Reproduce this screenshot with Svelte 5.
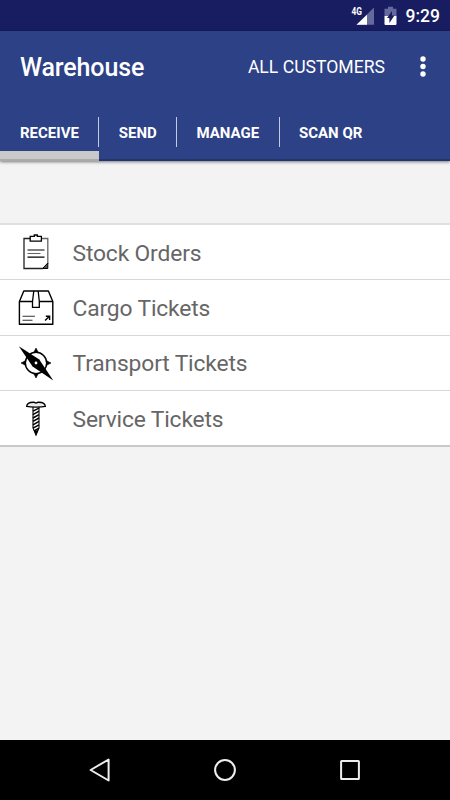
<script>
  const tabs = ['RECEIVE', 'SEND', 'MANAGE', 'SCAN QR'];

  const items = [
    { icon: 'clipboard', label: 'Stock Orders' },
    { icon: 'box', label: 'Cargo Tickets' },
    { icon: 'compass', label: 'Transport Tickets' },
    { icon: 'screw', label: 'Service Tickets' },
  ];

  let active = $state(0);
</script>

<div class="screen">
  <div class="status-bar">
    <svg class="signal" width="24" height="20" viewBox="0 0 24 20">
      <path d="M23 1.5v17.3H5.5z" fill="#66699b" />
      <path d="M16 8.7v10.1H5.5z" fill="#fff" />
      <text x="0.5" y="9.2" textLength="10.5" lengthAdjust="spacingAndGlyphs">4G</text>
    </svg>
    <svg class="battery" width="13" height="20" viewBox="0 0 13 20">
      <path d="M4 0.7h5v2h3.5V10H0.5V2.7H4z" fill="#66699b" />
      <path d="M0.5 10h12v8a1 1 0 0 1-1 1h-10a1 1 0 0 1-1-1z" fill="#fff" />
      <path d="M8 5v4.6h2.4L5.4 17v-5H3z" fill="#171d60" />
    </svg>
    <span class="clock">9:29</span>
  </div>

  <header class="app-bar">
    <div class="toolbar">
      <h1>Warehouse</h1>
      <button class="filter">ALL CUSTOMERS</button>
      <button class="overflow" aria-label="More options">
        <svg width="6" height="22" viewBox="0 0 6 22" fill="#fff">
          <circle cx="3" cy="3" r="2.7" />
          <circle cx="3" cy="10.5" r="2.7" />
          <circle cx="3" cy="18" r="2.7" />
        </svg>
      </button>
    </div>
    <nav class="tabs">
      {#each tabs as tab, i}
        <button class="tab" class:active={active === i} onclick={() => (active = i)}>
          <span>{tab}</span>
        </button>
      {/each}
    </nav>
  </header>

  <main>
    <ul class="list">
      {#each items as item}
        <li>
          <svg class="icon" width="38" height="38" viewBox="0 0 38 38" fill="none" stroke="#000">
            {#if item.icon === 'clipboard'}
              <path d="M24.5 4.5h6.3V30" stroke="#666" stroke-width="1.3" />
              <path d="M13 4.5H7v30h18.8" stroke="#222" stroke-width="1.3" />
              <path d="M13.2 2.3h4.1V1h3v1.3h4.1v4.9H13.2z" stroke-width="1.3" />
              <path d="M10.5 16h17M10.5 23.2h17" stroke-width="1.2" />
              <path d="M10.5 19.5h13" stroke="#666" stroke-width="1.1" />
              <path d="M25.5 34.5l5.3-5.5v5.5z" fill="#555" stroke-width="1" />
            {:else if item.icon === 'box'}
              <path d="M2.4 12.5L6.8 2h24.6L35.8 12.5v22.8H2.4z" stroke-width="1.4" stroke-linejoin="round" />
              <path d="M2.4 12.5h13.2M22.4 12.5h13.4" stroke-width="1.5" />
              <path d="M16.8 2l-1.3 10.5v5.8h6.8v-5.8L21.2 2" stroke-width="1.3" />
              <path d="M5.5 27.3h12.4M5.5 31.2h10" stroke="#333" stroke-width="1.1" />
              <path d="M28 31.6l4.5-4.3M28.8 27.2h3.8v3.8" stroke-width="1.4" />
            {:else if item.icon === 'compass'}
              <g transform="translate(0 -1)">
                <circle cx="19" cy="19" r="10.7" stroke-width="1.5" />
                <path
                  d="M17 8l2-4 2 4zM17 30l2 4 2-4zM8 17l-4 2 4 2zM30 17l4 2-4 2z"
                  fill="#000"
                  stroke-width="0.6"
                />
                <path d="M1.8 2.2L22.3 15.6 36.3 36.6 15.6 22.6z" fill="#000" stroke="none" />
                <circle cx="19" cy="19" r="1.4" fill="#fff" stroke="none" />
              </g>
            {:else}
              <path
                d="M9.7 6.4C9.9 3 13.5 2.2 17 2.3l2 .8 2-.8c3.5-.1 7.1.7 7.3 4.1-4 1-14.6 1-18.6 0z"
                fill="#eee"
                stroke-width="1.4"
              />
              <path d="M16 7v21l3 7 3-7V7" stroke-width="1.1" />
              <path
                d="M16 11.2l6-3M16 14.6l6-3.4M16 18l6-3.4M16 21.4l6-3.4M16 24.8l6-3.4M16 28.2l6-3.4M17 31l5-2.8"
                stroke-width="1.5"
              />
              <path d="M17.2 31l4-1-2.2 5.5z" fill="#000" stroke="none" />
            {/if}
          </svg>
          <span class="label">{item.label}</span>
        </li>
      {/each}
    </ul>
  </main>

  <footer class="nav-bar">
    <svg width="24" height="26" viewBox="0 0 24 26">
      <path d="M20.6 2.5v21L2.6 13z" />
    </svg>
    <svg width="24" height="26" viewBox="0 0 24 26">
      <circle cx="12" cy="13" r="9.9" />
    </svg>
    <svg width="24" height="26" viewBox="0 0 24 26">
      <rect x="3.1" y="4.1" width="17.8" height="17.8" rx="0.5" />
    </svg>
  </footer>
</div>

<style>
  :global(body) {
    margin: 0;
  }

  .screen {
    display: flex;
    flex-direction: column;
    width: 450px;
    height: 800px;
    overflow: hidden;
    background: #f3f3f3;
    font-family: Roboto, sans-serif;
  }

  button {
    margin: 0;
    padding: 0;
    border: 0;
    background: none;
    color: inherit;
    font: inherit;
  }

  .status-bar {
    display: flex;
    flex: none;
    align-items: center;
    justify-content: flex-end;
    box-sizing: border-box;
    height: 31px;
    padding-right: 10px;
    background: #171d60;
    color: #fff;
  }

  .signal text {
    font-size: 10.5px;
    font-weight: 700;
    fill: #fff;
  }

  .battery {
    margin: 0 9px 0 9px;
  }

  .clock {
    padding-top: 2px;
    font-size: 17.5px;
    font-weight: 500;
    line-height: 31px;
  }

  .app-bar {
    position: relative;
    flex: none;
    height: 130px;
    background: #2d4186;
    box-shadow: inset 0 -2px 0 rgba(0, 0, 0, 0.18), 0 1px 3px rgba(0, 0, 0, 0.5);
    color: #fff;
  }

  .toolbar {
    display: flex;
    align-items: center;
    height: 71px;
    padding: 0 24.5px 0 20px;
  }

  h1 {
    flex: 1;
    margin: 1px 0 0;
    font-size: 25px;
    font-weight: 500;
    letter-spacing: -0.12px;
  }

  .filter {
    margin-right: 34.5px;
    font-size: 17.6px;
  }

  .overflow {
    display: flex;
  }

  .tabs {
    display: flex;
    height: 59px;
  }

  .tab {
    display: flex;
    flex-direction: column;
    box-sizing: border-box;
    height: 59px;
    padding-top: 15px;
    font-size: 15px;
    font-weight: 700;
  }

  .tab span {
    height: 30px;
    padding: 0 19.4px;
    border-right: 1px solid #c5cae0;
    line-height: 32px;
  }

  .tab:first-child span {
    padding-left: 20px;
  }

  .tab:last-child span {
    border-right: 0;
  }

  .tab.active {
    box-shadow: inset 0 -2px 0 #aaa, inset 0 -10px 0 #c9c9c9;
  }

  main {
    flex: 1;
    padding-top: 62px;
  }

  .list {
    margin: 0;
    padding: 0;
    border-top: 2px solid #e0e0e0;
    border-bottom: 2px solid #c9c9c9;
    background: #fff;
    list-style: none;
  }

  li {
    display: flex;
    align-items: center;
    box-sizing: border-box;
    height: 55.3px;
    padding-left: 17px;
    border-bottom: 1px solid #d8d8d8;
  }

  li:last-child {
    height: 54.3px;
    border-bottom: 0;
  }

  .icon {
    margin-top: 2px;
  }

  .label {
    margin: 2px 0 0 17.5px;
    color: #666;
    font-size: 22.8px;
    letter-spacing: -0.14px;
  }

  .nav-bar {
    display: flex;
    flex: none;
    align-items: center;
    justify-content: space-between;
    box-sizing: border-box;
    height: 60px;
    padding: 0 88px;
    background: #000;
  }

  .nav-bar svg {
    fill: none;
    stroke: #eee;
    stroke-width: 2;
    stroke-linejoin: round;
  }
</style>
